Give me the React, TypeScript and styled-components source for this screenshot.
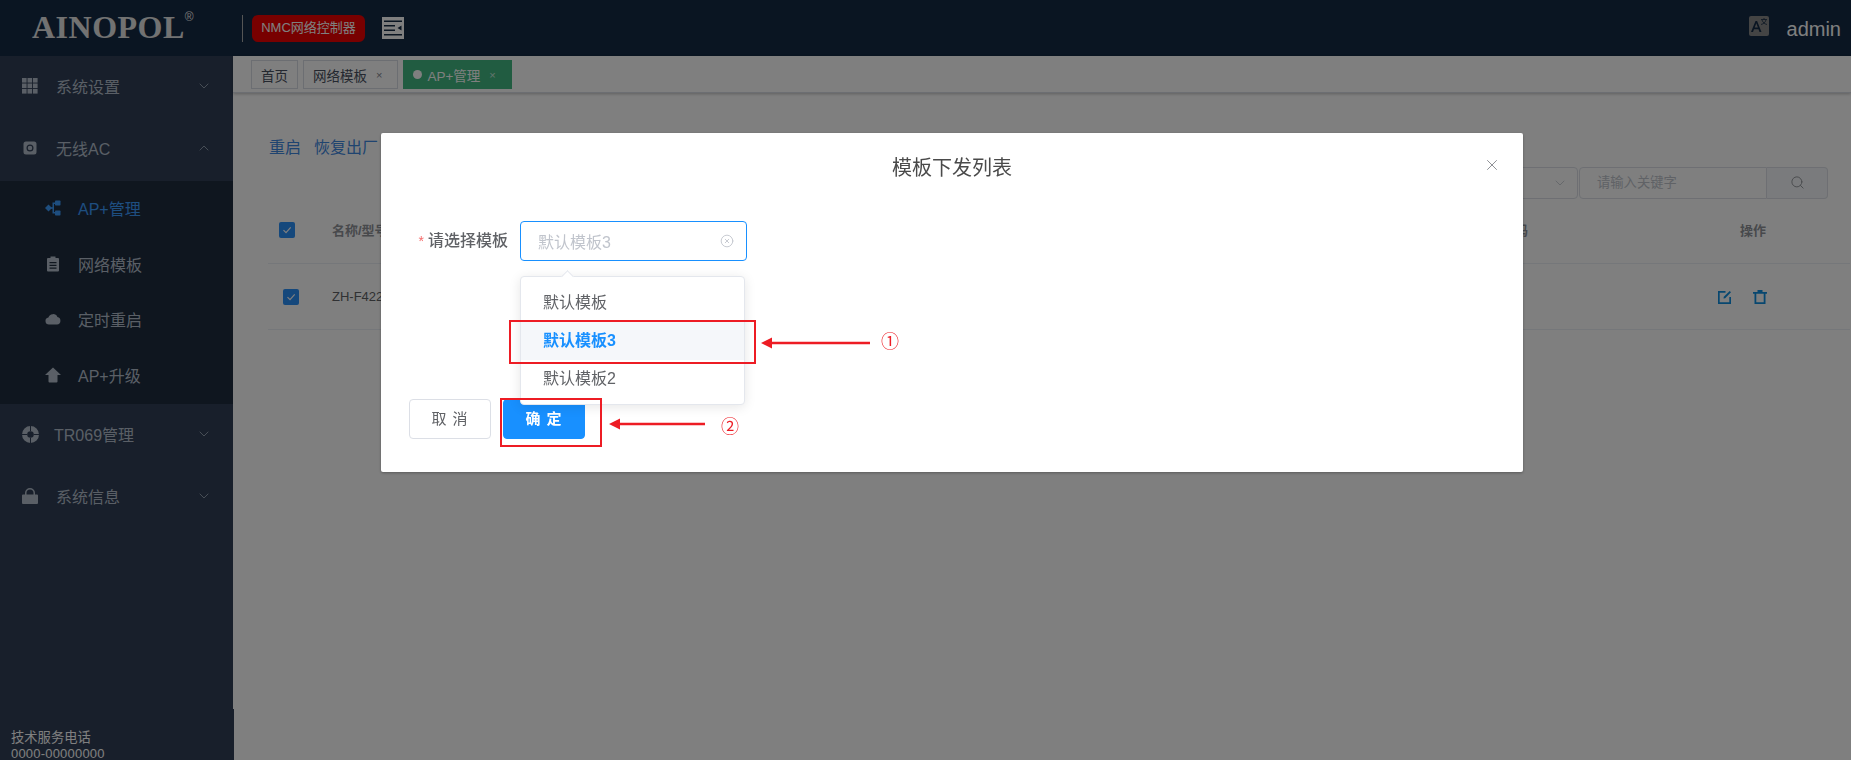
import React from "react";
import styled, { createGlobalStyle } from "styled-components";
import { ChevronDown, ChevronUp, CircleX, Search, X } from "lucide-react";

const GlobalStyle = createGlobalStyle`
  html, body {
    margin: 0;
    padding: 0;
    height: 100%;
    overflow: hidden;
    background: #fff;
    font-family: "Liberation Sans", "Noto Sans CJK SC", sans-serif;
  }
  * { box-sizing: border-box; }
`;

const Page = styled.div`
  width: 1851px;
  height: 760px;
  display: flex;
  flex-direction: column;
  overflow: hidden;
`;

/* header */
const Header = styled.header`
  height: 56px;
  flex: none;
  background: #142a44;
  display: flex;
  align-items: center;
  padding-right: 10px;
`;

const Logo = styled.div`
  width: 243px;
  padding: 0 0 2px 32px;
  font-family: "Liberation Serif", serif;
  font-weight: 700;
  font-size: 32px;
  line-height: 36px;
  letter-spacing: 0.5px;
  color: #e4e4e4;
  display: flex;
  sup {
    font-family: "Liberation Sans", sans-serif;
    font-size: 12px;
    line-height: 14px;
    font-weight: 400;
    margin: 1px 0 0 0;
  }
`;

const Badge = styled.div`
  width: 113px;
  height: 27px;
  margin-left: 9px;
  text-align: center;
  background: #f00000;
  border-radius: 6px;
  color: #fff;
  font-size: 13px;
  line-height: 25px;
  white-space: nowrap;
  position: relative;
  &::before {
    content: "";
    position: absolute;
    left: -10px;
    top: 0;
    height: 27px;
    border-left: 1px solid #aaa;
  }
`;

const MenuToggle = styled.svg`
  margin-left: 17px;
  width: 22px;
  height: 22px;
`;

const HeaderRight = styled.div`
  margin-left: auto;
  display: flex;
  align-items: center;
  gap: 18px;
`;

const Lang = styled.svg`
  width: 20px;
  height: 20px;
  margin-top: -4px;
`;

const UserName = styled.span`
  color: #fff;
  font-size: 20px;
  line-height: 24px;
  margin-top: 1px;
`;

/* sidebar */
const Body = styled.div`
  flex: 1;
  display: flex;
  min-height: 0;
`;

const Sidebar = styled.aside`
  width: 233px;
  flex: none;
  background: #303e56;
  color: #b4bfcc;
  display: flex;
  flex-direction: column;
  font-size: 16px;
`;

const MenuItem = styled.div<{ $narrow?: boolean }>`
  height: 62px;
  flex: none;
  display: flex;
  align-items: center;
  padding: 0 0 2px 22px;
  gap: ${(p) => (p.$narrow ? "15px" : "18px")};
  position: relative;
  svg.arrow {
    position: absolute;
    left: 196px;
    top: 22px;
    color: #bfcbd9;
  }
`;

const SubMenu = styled.div`
  height: 223px;
  flex: none;
  margin-top: 1px;
  background: #1e2c3e;
  display: flex;
  flex-direction: column;
`;

const SubItem = styled.div<{ $active?: boolean }>`
  flex: 1;
  display: flex;
  align-items: center;
  padding: 0 0 2px 45px;
  gap: 17px;
  color: ${(p) => (p.$active ? "#3c9cff" : "#b4bfcc")};
`;

const Icon = styled.svg<{ $size?: number }>`
  width: ${(p) => p.$size ?? 16}px;
  height: ${(p) => p.$size ?? 16}px;
  flex: none;
  fill: currentColor;
`;

const SideFooter = styled.div`
  margin-top: auto;
  width: 234px;
  height: 51px;
  background: #303e56;
  padding: 21px 0 0 11px;
  color: #fff;
  font-size: 13.3px;
  line-height: 16px;
  span {
    display: block;
    font-size: 13px;
    letter-spacing: 0.2px;
  }
`;

/* main */
const Main = styled.main`
  flex: 1;
  min-width: 0;
  display: flex;
  flex-direction: column;
`;

const TabBar = styled.div`
  height: 37px;
  flex: none;
  padding: 4px 0 0 18px;
  display: flex;
  gap: 5px;
  border-bottom: 1px solid #d8dce5;
  box-shadow: 0 1px 3px rgba(0, 0, 0, 0.25);
`;

const Tab = styled.div<{ $active?: boolean }>`
  height: 29px;
  display: flex;
  align-items: center;
  gap: 5px;
  padding: 0 9px;
  font-size: 13.5px;
  border: 1px solid ${(p) => (p.$active ? "#42b983" : "#d8dce5")};
  background: ${(p) => (p.$active ? "#42b983" : "#fff")};
  color: ${(p) => (p.$active ? "#fff" : "#495060")};
  small {
    font-size: 11px;
    margin: 0 6px 0 4px;
    opacity: 0.7;
  }
  i {
    width: 9px;
    height: 9px;
    border-radius: 50%;
    background: #fff;
  }
`;

const Content = styled.div`
  flex: 1;
  padding: 39px 1px 0 35px;
`;

const Toolbar = styled.div`
  display: flex;
  height: 67px;
  padding-left: 1px;
  align-items: flex-start;
`;

const ToolLink = styled.a`
  color: #3f88e0;
  font-size: 16px;
  line-height: 32px;
  margin-right: 13px;
`;

const SearchGroup = styled.div`
  margin: 35px 22px 0 auto;
  display: flex;
  height: 32px;
`;

const FakeSelect = styled.div`
  width: 140px;
  border: 1px solid #dcdfe6;
  border-radius: 4px;
  display: flex;
  align-items: center;
  justify-content: flex-end;
  padding-right: 9px;
  color: #c0c4cc;
  margin-right: 1px;
`;

const KeywordInput = styled.div`
  width: 188px;
  border: 1px solid #dcdfe6;
  border-radius: 4px 0 0 4px;
  padding-left: 17px;
  color: #c0c4cc;
  font-size: 13.3px;
  line-height: 30px;
`;

const SearchButton = styled.div`
  width: 61px;
  border: 1px solid #dcdfe6;
  border-left: 0;
  border-radius: 0 4px 4px 0;
  background: #f5f7fa;
  color: #909399;
  display: flex;
  align-items: center;
  justify-content: center;
  padding-bottom: 2px;
`;

const TableRow = styled.div<{ $head?: boolean }>`
  height: ${(p) => (p.$head ? "65px" : "66px")};
  padding-bottom: ${(p) => (p.$head ? "3px" : "0")};
  display: grid;
  grid-template-columns: 64px 1fr auto 132px;
  align-items: center;
  border-bottom: 1px solid #ebeef5;
  font-size: 13px;
  color: ${(p) => (p.$head ? "#909399" : "#606266")};
  font-weight: ${(p) => (p.$head ? 700 : 400)};
`;

const CheckCell = styled.div<{ $offset: number }>`
  padding-left: ${(p) => p.$offset}px;
`;

const Check = styled.span`
  width: 16px;
  height: 16px;
  border-radius: 2px;
  background: #2a90f8;
  display: flex;
  align-items: center;
  justify-content: center;
  svg {
    width: 10px;
    height: 10px;
  }
`;

const TailCell = styled.div`
  padding-right: 190px;
`;

const ActionHead = styled.div`
  padding-left: 22px;
`;

const Actions = styled.div`
  display: flex;
  gap: 21px;
  color: #0f8fe0;
`;

/* dialog, sits over the whole page */
const Overlay = styled.div`
  position: fixed;
  inset: 0;
  background: rgba(0, 0, 0, 0.5);
  padding: 133px 0 0 381px;
`;

const Dialog = styled.div`
  width: 1142px;
  height: 339px;
  background: #fff;
  border-radius: 2px;
  box-shadow: 0 1px 3px rgba(0, 0, 0, 0.3);
  position: relative;
  display: flex;
  flex-direction: column;
`;

const DialogTitle = styled.div`
  height: 70px;
  line-height: 70px;
  text-align: center;
  font-size: 20px;
  color: #4a4a4a;
`;

const CloseButton = styled.div`
  position: absolute;
  right: 22px;
  top: 23px;
  color: #777a80;
  display: flex;
`;

const FormRow = styled.div`
  margin-top: 18px;
  height: 40px;
  display: flex;
  align-items: center;
`;

const FormLabel = styled.label`
  width: 139px;
  padding: 0 12px 0 0;
  text-align: right;
  font-size: 16px;
  font-weight: 500;
  color: #606266;
  margin-top: -4px;
  em {
    color: #f56c6c;
    font-style: normal;
    font-size: 14px;
    margin-right: 4px;
  }
`;

const SelectBox = styled.div`
  width: 227px;
  height: 40px;
  border: 1px solid #1890ff;
  border-radius: 4px;
  display: flex;
  align-items: center;
  justify-content: space-between;
  padding: 0 12px 0 17px;
  color: #c0c4cc;
  font-size: 16px;
  position: relative;
`;

const Dropdown = styled.div`
  position: absolute;
  left: -1px;
  top: 54px;
  width: 225px;
  padding: 7px 0 6px;
  background: #fff;
  border: 1px solid #e4e7ed;
  border-radius: 4px;
  box-shadow: 0 2px 12px rgba(0, 0, 0, 0.1);
  z-index: 2;
  &::before {
    content: "";
    position: absolute;
    left: 42px;
    top: -5px;
    width: 8px;
    height: 8px;
    background: #fff;
    border-left: 1px solid #e4e7ed;
    border-top: 1px solid #e4e7ed;
    transform: rotate(45deg);
  }
`;

const Option = styled.div<{ $selected?: boolean }>`
  height: 38px;
  line-height: 38px;
  padding-left: 22px;
  font-size: 16px;
  color: ${(p) => (p.$selected ? "#1890ff" : "#606266")};
  font-weight: ${(p) => (p.$selected ? 700 : 400)};
  background: ${(p) => (p.$selected ? "#f5f7fa" : "transparent")};
`;

const DialogFooter = styled.div`
  margin-top: 138px;
  padding-left: 28px;
  display: flex;
  gap: 12px;
`;

const Button = styled.div<{ $primary?: boolean }>`
  width: 82px;
  height: 40px;
  line-height: 38px;
  text-align: center;
  border-radius: 4px;
  font-size: 15px;
  letter-spacing: 1px;
  border: 1px solid ${(p) => (p.$primary ? "#1890ff" : "#dcdfe6")};
  background: ${(p) => (p.$primary ? "#1890ff" : "#fff")};
  color: ${(p) => (p.$primary ? "#fff" : "#606266")};
  font-weight: ${(p) => (p.$primary ? 700 : 400)};
`;

/* red annotations drawn on the screenshot */
const MarkBox = styled.div<{ $l: number; $t: number; $w: number; $h: number }>`
  position: absolute;
  left: ${(p) => p.$l}px;
  top: ${(p) => p.$t}px;
  width: ${(p) => p.$w}px;
  height: ${(p) => p.$h}px;
  border: 2.5px solid #ed1c24;
  z-index: 3;
`;

const MarkArrow = styled.svg<{ $l: number; $t: number; $w: number }>`
  position: absolute;
  left: ${(p) => p.$l}px;
  top: ${(p) => p.$t}px;
  width: ${(p) => p.$w}px;
  height: 12px;
  z-index: 3;
`;

const MarkNumber = styled.span<{ $l: number; $t: number }>`
  position: absolute;
  left: ${(p) => p.$l}px;
  top: ${(p) => p.$t}px;
  color: #ed1c24;
  font-family: "Noto Sans CJK SC", sans-serif;
  font-size: 18px;
  line-height: 20px;
  z-index: 3;
`;

function Arrow(props: { l: number; t: number; w: number }) {
  return (
    <MarkArrow $l={props.l} $t={props.t} $w={props.w} viewBox={`0 0 ${props.w} 12`}>
      <path d={`M0 6 L11 0.5 L11 4.700 H${props.w} V7.300 H11 L11 11.500 Z`} fill="#ed1c24" />
    </MarkArrow>
  );
}

function GridIcon() {
  return (
    <Icon viewBox="0 0 16 16">
      {[0, 5.5, 11].map((y) =>
        [0, 5.5, 11].map((x) => <rect key={`${x}-${y}`} x={x} y={y} width="4.6" height="4.6" />),
      )}
    </Icon>
  );
}

function ChipIcon() {
  return (
    <Icon viewBox="0 0 16 16">
      <path
        fillRule="evenodd"
        d="M4 1.500h8a2.500 2.500 0 0 1 2.500 2.500v8a2.500 2.500 0 0 1-2.500 2.500H4A2.500 2.500 0 0 1 1.500 12V4A2.500 2.500 0 0 1 4 1.500zM8 4.500a3.500 3.500 0 1 0 0 7 3.500 3.500 0 0 0 0-7zM8 5.700a2.300 2.300 0 1 1 0 4.600 2.300 2.300 0 0 1 0-4.600z"
      />
      <rect x="6" y="7.500" width="4" height="1" />
    </Icon>
  );
}

function TreeIcon() {
  return (
    <Icon viewBox="0 0 16 16">
      <path d="M0 8 L3.500 4.500 L7 8 L3.500 11.500z" />
      <rect x="10" y="0.500" width="5.500" height="5" rx="0.800" />
      <rect x="10" y="10.500" width="5.500" height="5" rx="0.800" />
      <path d="M6 7.200h1.500V2.500H10v1.500H9v8h1v1.500H7.500V8.800H6z" />
    </Icon>
  );
}

function ClipboardIcon() {
  return (
    <Icon viewBox="0 0 16 16">
      <path
        fillRule="evenodd"
        d="M5.500 0.500h5v1.500H13a1 1 0 0 1 1 1v11.500a1 1 0 0 1-1 1H3a1 1 0 0 1-1-1V3a1 1 0 0 1 1-1h2.500zM4.500 6v1.200h7V6zM4.500 8.800V10h7V8.800zM4.500 11.500v1.200h7v-1.200z"
      />
    </Icon>
  );
}

function CloudIcon() {
  return (
    <Icon viewBox="0 0 16 16">
      <path d="M4 13.500a3.500 3.500 0 0 1-.6-6.950A4.800 4.800 0 0 1 12.400 6 3.800 3.800 0 0 1 12 13.500z" />
    </Icon>
  );
}

function UpgradeIcon() {
  return (
    <Icon viewBox="0 0 16 16">
      <path d="M8 0.500 L16 8 H12.500 V14.500 a1 1 0 0 1-1 1 H4.500 a1 1 0 0 1-1-1 V8 H0 Z" />
    </Icon>
  );
}

function RingIcon() {
  return (
    <Icon viewBox="0 0 17 17" $size={17}>
      <path
        fillRule="evenodd"
        d="M8.500 0a8.500 8.500 0 1 1 0 17 8.500 8.500 0 0 1 0-17zM8.500 5.200a3.300 3.300 0 1 0 0 6.600 3.300 3.300 0 0 0 0-6.600z"
      />
      <path d="M8 0h1v5.300H8zM8 11.700h1V17H8zM0 8h5.300v1H0zM11.700 8H17v1h-5.300z" fill="#303e56" />
    </Icon>
  );
}

function LockIcon() {
  return (
    <Icon viewBox="0 0 16 16">
      <path
        fillRule="evenodd"
        d="M8 0a5 5 0 0 1 5 5v1.500h2a1 1 0 0 1 1 1V15a1 1 0 0 1-1 1H1a1 1 0 0 1-1-1V7.500a1 1 0 0 1 1-1h2V5a5 5 0 0 1 5-5zM8 1.500A3.500 3.500 0 0 0 4.500 5v1.500h7V5A3.500 3.500 0 0 0 8 1.500z"
      />
    </Icon>
  );
}

function CheckMark() {
  return (
    <Check>
      <svg viewBox="0 0 10 10">
        <path d="M1.500 5.200 L4 7.700 L8.700 2.300" stroke="#fff" strokeWidth="1.200" fill="none" />
      </svg>
    </Check>
  );
}

export default function App() {
  return (
    <Page>
      <GlobalStyle />
      <Header>
        <Logo>
          AINOPOL<sup>®</sup>
        </Logo>
        <Badge>NMC网络控制器</Badge>
        <MenuToggle viewBox="0 0 22 22">
          <rect width="22" height="22" fill="#fff" />
          <path d="M2 3.500h18v1.500H2zM2 8h11v1.500H2zM2 12.500h11V14H2zM2 17h18v1.500H2z" fill="#142a44" />
          <path d="M19.500 8.500v5l-4-2.500z" fill="#142a44" />
        </MenuToggle>
        <HeaderRight>
          <Lang viewBox="0 0 20 20">
            <rect width="20" height="20" rx="2" fill="#888" />
            <path d="M2 16 L6.500 5h1.600L12.500 16h-2l-1-2.800H5L4 16zM5.700 11.500h3.200L7.300 7.300z" fill="#142a44" />
            <path d="M12 3.500h6M15 2v1.500M13 4c.5 2 2.500 4 5 4.500M17 4c-.5 2-2.500 4-5 4.500" stroke="#142a44" strokeWidth="0.800" fill="none" />
          </Lang>
          <UserName>admin</UserName>
        </HeaderRight>
      </Header>
      <Body>
        <Sidebar>
          <MenuItem>
            <GridIcon />
            系统设置
            <ChevronDown className="arrow" size={16} strokeWidth={1} />
          </MenuItem>
          <MenuItem>
            <ChipIcon />
            无线AC
            <ChevronUp className="arrow" size={16} strokeWidth={1} />
          </MenuItem>
          <SubMenu>
            <SubItem $active>
              <TreeIcon />
              AP+管理
            </SubItem>
            <SubItem>
              <ClipboardIcon />
              网络模板
            </SubItem>
            <SubItem>
              <CloudIcon />
              定时重启
            </SubItem>
            <SubItem>
              <UpgradeIcon />
              AP+升级
            </SubItem>
          </SubMenu>
          <MenuItem $narrow>
            <RingIcon />
            TR069管理
            <ChevronDown className="arrow" size={16} strokeWidth={1} />
          </MenuItem>
          <MenuItem>
            <LockIcon />
            系统信息
            <ChevronDown className="arrow" size={16} strokeWidth={1} />
          </MenuItem>
          <SideFooter>
            技术服务电话
            <span>0000-00000000</span>
          </SideFooter>
        </Sidebar>
        <Main>
          <TabBar>
            <Tab>首页</Tab>
            <Tab>
              网络模板<small>×</small>
            </Tab>
            <Tab $active>
              <i />
              AP+管理<small>×</small>
            </Tab>
          </TabBar>
          <Content>
            <Toolbar>
              <ToolLink>重启</ToolLink>
              <ToolLink>恢复出厂</ToolLink>
              <SearchGroup>
                <FakeSelect>
                  <ChevronDown size={16} strokeWidth={1.2} />
                </FakeSelect>
                <KeywordInput>请输入关键字</KeywordInput>
                <SearchButton>
                  <Search size={15} strokeWidth={1.5} />
                </SearchButton>
              </SearchGroup>
            </Toolbar>
            <TableRow $head>
              <CheckCell $offset={11}>
                <CheckMark />
              </CheckCell>
              <div>名称/型号</div>
              <TailCell>设备编码</TailCell>
              <ActionHead>操作</ActionHead>
            </TableRow>
            <TableRow>
              <CheckCell $offset={15}>
                <CheckMark />
              </CheckCell>
              <div>ZH-F422</div>
              <TailCell />
              <Actions>
                <Icon viewBox="0 0 14 14" $size={14}>
                  <path d="M0 1h7.500v1.700H1.700v9.600h9.600V7H13v7H0z" />
                  <path d="M11.700 1 13 2.300 7.200 8.200 5.500 8.500 5.800 6.800z" />
                </Icon>
                <Icon viewBox="0 0 14 14" $size={14}>
                  <path
                    fillRule="evenodd"
                    d="M4.500 0h5v2H14v1.800h-1.500V14h-11V3.800H0V2h4.500zM3.300 3.800v8.400h7.400V3.800z"
                  />
                </Icon>
              </Actions>
            </TableRow>
          </Content>
        </Main>
      </Body>
      <Overlay>
        <Dialog>
          <DialogTitle>模板下发列表</DialogTitle>
          <CloseButton>
            <X size={18} strokeWidth={1.1} />
          </CloseButton>
          <FormRow>
            <FormLabel>
              <em>*</em>请选择模板
            </FormLabel>
            <SelectBox>
              默认模板3
              <CircleX size={14} strokeWidth={1.5} />
              <Dropdown>
                <Option>默认模板</Option>
                <Option $selected>默认模板3</Option>
                <Option>默认模板2</Option>
              </Dropdown>
            </SelectBox>
          </FormRow>
          <DialogFooter>
            <Button>取 消</Button>
            <Button $primary>确 定</Button>
          </DialogFooter>
          <MarkBox $l={128} $t={187} $w={247} $h={44} />
          <Arrow l={380} t={204} w={109} />
          <MarkNumber $l={500} $t={197}>①</MarkNumber>
          <MarkBox $l={119} $t={265} $w={102} $h={49} />
          <Arrow l={228} t={285} w={96} />
          <MarkNumber $l={340} $t={282}>②</MarkNumber>
        </Dialog>
      </Overlay>
    </Page>
  );
}
